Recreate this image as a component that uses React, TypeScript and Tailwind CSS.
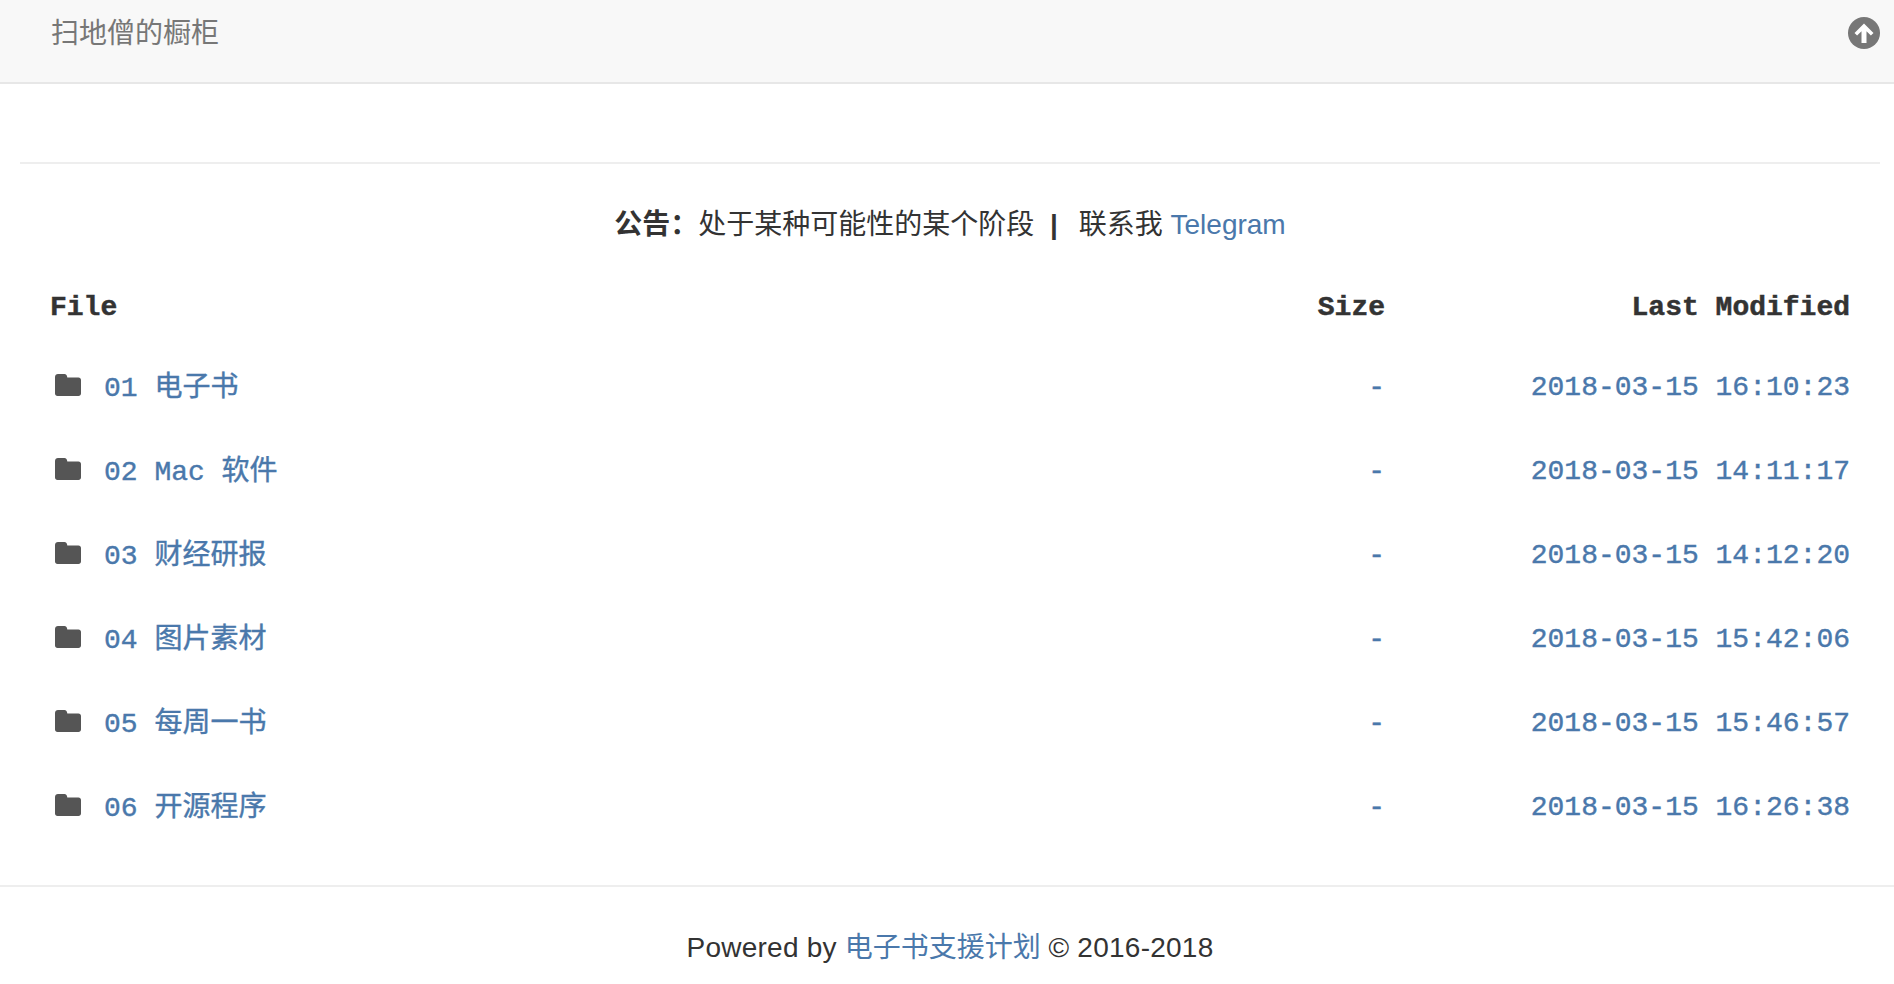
const rows = [
  { name: "01 电子书", date: "2018-03-15 16:10:23" },
  { name: "02 Mac 软件", date: "2018-03-15 14:11:17" },
  { name: "03 财经研报", date: "2018-03-15 14:12:20" },
  { name: "04 图片素材", date: "2018-03-15 15:42:06" },
  { name: "05 每周一书", date: "2018-03-15 15:46:57" },
  { name: "06 开源程序", date: "2018-03-15 16:26:38" },
];

function FolderIcon() {
  return (
    <svg viewBox="0 0 26 22" className="w-[26px] h-[22px] shrink-0 fill-[#555555]">
      <path d="M3 0h6.500c1.400 0 2.400 1 2.600 2.400l.2 1.100H23.500c1.400 0 2.500 1.100 2.500 2.500V19.500c0 1.400-1.100 2.500-2.500 2.500H2.500C1.100 22 0 20.900 0 19.500V3c0-1.700 1.300-3 3-3z" />
    </svg>
  );
}

function UpIcon() {
  return (
    <svg viewBox="0 0 32 32" className="w-8 h-8">
      <circle cx="16" cy="16" r="16" fill="#777777" />
      <path d="M16 6.500 25.500 16l-2.600 2.600-4.400-4.400V26h-5V14.200l-4.400 4.400L6.500 16z" fill="#ffffff" />
    </svg>
  );
}

export default function App() {
  return (
    <div className="min-h-[984px] bg-white text-[#333333] text-[28px] font-['Liberation_Sans','Noto_Sans_CJK_SC',sans-serif]">
      <nav className="h-[84px] bg-[#f8f8f8] border-b-2 border-[#e7e7e7] flex items-start justify-between pt-[14px] pl-[51px] pr-[14px]">
        <span className="text-[#777777] leading-[40px]">扫地僧的橱柜</span>
        <span className="mt-[3px] flex"><UpIcon /></span>
      </nav>

      <main className="pl-5 pr-[14px]">
        <hr className="mt-[78px] border-t-2 border-[#eeeeee]" />
        <p className="mt-[41px] text-center leading-[40px]">
          <b>公告：</b>处于某种可能性的某个阶段 <b className="ml-2 mr-[13px]">|</b> 联系我{" "}
          <a className="text-[#4a78ab]">Telegram</a>
        </p>

        <table className="w-full mt-[24px] font-['Liberation_Mono','Noto_Sans_CJK_SC',monospace]">
          <thead>
            <tr className="h-[78px] [-webkit-text-stroke:0.5px]">
              <th className="text-left pl-[30px] font-bold">File</th>
              <th className="text-right w-[240px] font-bold">Size</th>
              <th className="text-right w-[495px] pr-[30px] font-bold">Last Modified</th>
            </tr>
          </thead>
          <tbody className="text-[#4a78ab] [-webkit-text-stroke:0.4px]">
            {rows.map((row) => (
              <tr key={row.name} className="h-[84px]">
                <td className="pl-[35px]">
                  <span className="flex items-center gap-[23px]">
                    <span className="mt-[-8px] flex"><FolderIcon /></span>
                    <a>{row.name}</a>
                  </span>
                </td>
                <td className="text-right pb-[2px]">-</td>
                <td className="text-right pr-[30px] pb-[2px]">{row.date}</td>
              </tr>
            ))}
          </tbody>
        </table>
      </main>

      <footer className="mt-[34px] border-t-2 border-[#eeeeee] pt-[41px] pl-[6px] text-center leading-[40px]">
        <span className="tracking-[0.25px]">Powered by</span> <a className="text-[#4a78ab]">电子书支援计划</a>{" "}
        <span className="tracking-[0.25px]">© 2016-2018</span>
      </footer>
    </div>
  );
}
